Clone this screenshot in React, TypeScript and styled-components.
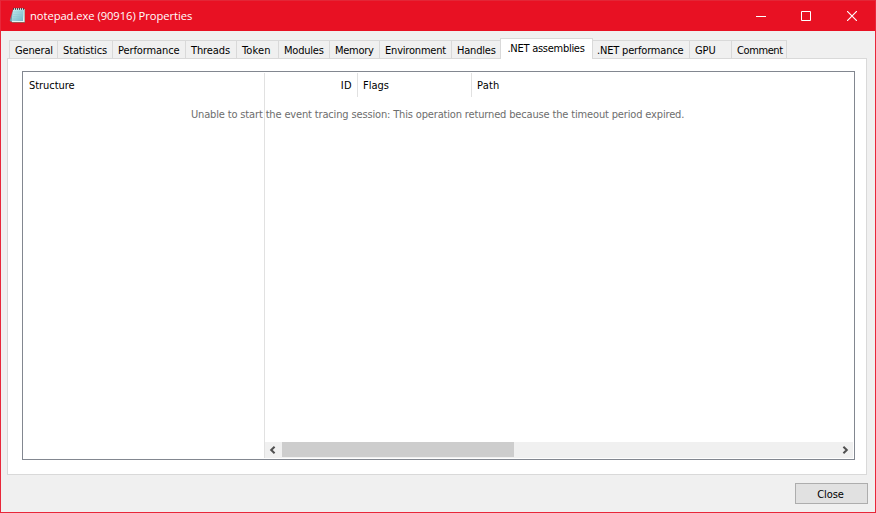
import React from 'react';
import styled, { createGlobalStyle } from 'styled-components';

const Global = createGlobalStyle`
  * { box-sizing: border-box; }
  body { margin: 0; overflow: hidden; }
`;

const Window = styled.div`
  width: 876px;
  height: 513px;
  display: flex;
  flex-direction: column;
  border: 1px solid #e8273a;
  border-top-color: #e32636;
  background: #f0f0f0;
  font: 11px/14px "DejaVu Sans Condensed", "DejaVu Sans", sans-serif;
  color: #000;
  white-space: pre;
`;

const TitleBar = styled.header`
  height: 30px;
  flex: none;
  display: flex;
  align-items: center;
  background: #e81123;
  color: #fff;
  padding-left: 8px;
`;

const Title = styled.h1`
  flex: 1;
  margin: 0 0 0 4px;
  font: 400 11.2px/16px "Open Sans", sans-serif;
  letter-spacing: -0.05px;
`;

const WindowButton = styled.button`
  width: 46px;
  height: 30px;
  padding: 0;
  border: 0;
  background: none;
  color: #fff;
  display: flex;
  align-items: center;
  justify-content: center;
`;

const WindowButtons = styled.div`
  display: flex;
`;

const TabStrip = styled.nav`
  height: 27px;
  flex: none;
  display: flex;
  align-items: flex-end;
  padding-left: 8px;
`;

const Tab = styled.button<{ $width: number; $selected?: boolean; $last?: boolean; $inset?: number; $after?: boolean }>`
  width: ${p => p.$width}px;
  height: ${p => (p.$selected ? 21 : 18)}px;
  margin-bottom: ${p => (p.$selected ? -1 : 0)}px;
  padding: 3px 0 0 ${p => p.$inset ?? 5}px;
  border: 1px solid #d9d9d9;
  border-bottom: 0;
  border-left-width: ${p => (p.$after ? 0 : 1)}px;
  border-right-width: ${p => (p.$last || p.$selected ? 1 : 0)}px;
  background: ${p => (p.$selected ? '#fff' : '#f0f0f0')};
  position: relative;
  font: inherit;
  color: inherit;
  display: flex;
  align-items: flex-start;
`;

const Label = styled.span<{ $spacing?: number }>`
  letter-spacing: ${p => p.$spacing ?? -0.15}px;
`;

const Page = styled.main`
  height: 417px;
  margin: 0 8px 0 6px;
  flex: none;
  border: 1px solid #d9d9d9;
  background: #fff;
  padding: 12px 11px 14px 14px;
`;

const TreeList = styled.section`
  height: 389px;
  border: 1px solid #828790;
  display: flex;
  padding: 1px 1px 1px 0;
  position: relative;
`;

const FixedPane = styled.div`
  width: 242px;
  flex: none;
  border-right: 1px solid #e1e1e1;
`;

const ScrollPane = styled.div`
  flex: 1;
  display: flex;
  flex-direction: column;
  justify-content: space-between;
`;

const HeaderRow = styled.div`
  display: flex;
  height: 24px;
`;

const HeaderCell = styled.div<{ $width?: number; $right?: boolean }>`
  width: ${p => (p.$width ? `${p.$width}px` : 'auto')};
  padding: 6px ${p => (p.$right ? 5 : 0)}px 0 ${p => (p.$right ? 0 : 5)}px;
  text-align: ${p => (p.$right ? 'right' : 'left')};
  border-right: ${p => (p.$width ? '1px solid #e1e1e1' : '0')};
`;

const FixedHeader = styled.div`
  padding: 6px 0 0 6px;
`;

const Message = styled.p`
  position: absolute;
  top: 36px;
  left: 168px;
  margin: 0;
  color: #6d6d6d;
`;

const ScrollBar = styled.div`
  height: 16px;
  display: flex;
  background: #f0f0f0;
  color: #505050;
`;

const ScrollArrow = styled.div<{ $end?: boolean }>`
  width: 17px;
  height: 15px;
  padding: ${p => (p.$end ? '0 0 0 2px' : '0 2px 0 0')};
  display: flex;
  align-items: center;
  justify-content: center;
`;

const Track = styled.div`
  flex: 1;
`;

const Thumb = styled.div`
  width: 232px;
  height: 15px;
  background: #cdcdcd;
`;

const Footer = styled.footer`
  display: flex;
  justify-content: flex-end;
  padding: 8px 7px 0 0;
`;

const PushButton = styled.button`
  width: 73px;
  height: 21px;
  padding: 2px 2px 0 0;
  border: 1px solid #adadad;
  background: #e1e1e1;
  font: inherit;
  color: inherit;
`;

const NotepadSvg = styled.svg`
  margin-bottom: 2px;
`;

const NotepadIcon = () => (
  <NotepadSvg width="17" height="17" viewBox="0 0 17 17">
    <defs>
      <linearGradient id="paper" x1="0" y1="0" x2="1" y2="1">
        <stop offset="0" stopColor="#d0f1f3" />
        <stop offset="1" stopColor="#6bb4c6" />
      </linearGradient>
    </defs>
    <path d="M4 2.5.7 14l3 1.5z" fill="#6f9aa6" />
    <path d="M5 2h11v13.8H3z" fill="#80705f" />
    <path d="M4.2 2h11.3v13H3z" fill="#e8f3f2" />
    <path d="M4.2 2.5h10.6L14 14H2.6z" fill="url(#paper)" />
    <path d="M4.5 5h9.5M4.2 7.3h9.5M3.9 9.6h9.5M3.5 12h9.5" stroke="#8dc6d0" strokeWidth=".6" />
    <path d="M4.5.9v2M6.5.9v2M8.5.9v2M10.5.9v2M12.5.9v2M14.5.9v2" stroke="#33454a" strokeWidth=".9" />
    <path d="M5.5 1v2M7.5 1v2M9.5 1v2M11.5 1v2M13.5 1v2" stroke="#d6e2e3" strokeWidth=".8" />
  </NotepadSvg>
);

const tabs = [
  { name: 'General', width: 48, spacing: -0.15 },
  { name: 'Statistics', width: 55, spacing: -0.12 },
  { name: 'Performance', width: 73, spacing: -0.1 },
  { name: 'Threads', width: 51, spacing: -0.1 },
  { name: 'Token', width: 42, spacing: 0.12 },
  { name: 'Modules', width: 51, spacing: -0.22 },
  { name: 'Memory', width: 50, spacing: -0.28 },
  { name: 'Environment', width: 72, spacing: -0.2 },
  { name: 'Handles', width: 49, spacing: -0.2 },
  { name: '.NET assemblies', width: 93, spacing: -0.27, selected: true, inset: 6.5 },
  { name: '.NET performance', width: 96, spacing: -0.18, inset: 4, after: true },
  { name: 'GPU', width: 42, spacing: -0.1 },
  { name: 'Comment', width: 56, spacing: -0.4, last: true },
];

export default function App() {
  return (
    <>
      <Global />
      <Window>
        <TitleBar>
          <NotepadIcon />
          <Title>notepad.exe (90916) Properties</Title>
          <WindowButtons>
            <WindowButton aria-label="Minimize">
              <svg width="12" height="10"><path d="M2 5h10v1H2z" fill="currentColor" /></svg>
            </WindowButton>
            <WindowButton aria-label="Maximize">
              <svg width="10" height="10"><path d="M.5.5h9v9h-9z" fill="none" stroke="currentColor" /></svg>
            </WindowButton>
            <WindowButton aria-label="Close window">
              <svg width="10" height="10"><path d="m0 0 10 10M10 0 0 10" fill="none" stroke="currentColor" strokeWidth="1.15" /></svg>
            </WindowButton>
          </WindowButtons>
        </TitleBar>
        <TabStrip>
          {tabs.map(t => (
            <Tab key={t.name} $width={t.width} $selected={t.selected} $last={t.last} $inset={t.inset} $after={t.after}>
              <Label $spacing={t.spacing}>{t.name}</Label>
            </Tab>
          ))}
        </TabStrip>
        <Page>
          <TreeList>
            <FixedPane>
              <FixedHeader><Label $spacing={-0.05}>Structure</Label></FixedHeader>
            </FixedPane>
            <ScrollPane>
              <HeaderRow>
                <HeaderCell $width={93} $right><Label $spacing={0.4}>ID</Label></HeaderCell>
                <HeaderCell $width={114}><Label $spacing={0}>Flags</Label></HeaderCell>
                <HeaderCell><Label $spacing={0.2}>Path</Label></HeaderCell>
              </HeaderRow>
              <ScrollBar>
                <ScrollArrow>
                  <svg width="7" height="8"><path d="M5.6.7 2.2 4l3.4 3.3" fill="none" stroke="currentColor" strokeWidth="2" /></svg>
                </ScrollArrow>
                <Track><Thumb /></Track>
                <ScrollArrow $end>
                  <svg width="7" height="8"><path d="M1.4.7 4.8 4 1.4 7.3" fill="none" stroke="currentColor" strokeWidth="2" /></svg>
                </ScrollArrow>
              </ScrollBar>
            </ScrollPane>
            <Message>
              <Label $spacing={-0.155}>Unable to start the event tracing session: This operation returned because the timeout period expired.</Label>
            </Message>
          </TreeList>
        </Page>
        <Footer>
          <PushButton><Label $spacing={-0.1}>Close</Label></PushButton>
        </Footer>
      </Window>
    </>
  );
}
